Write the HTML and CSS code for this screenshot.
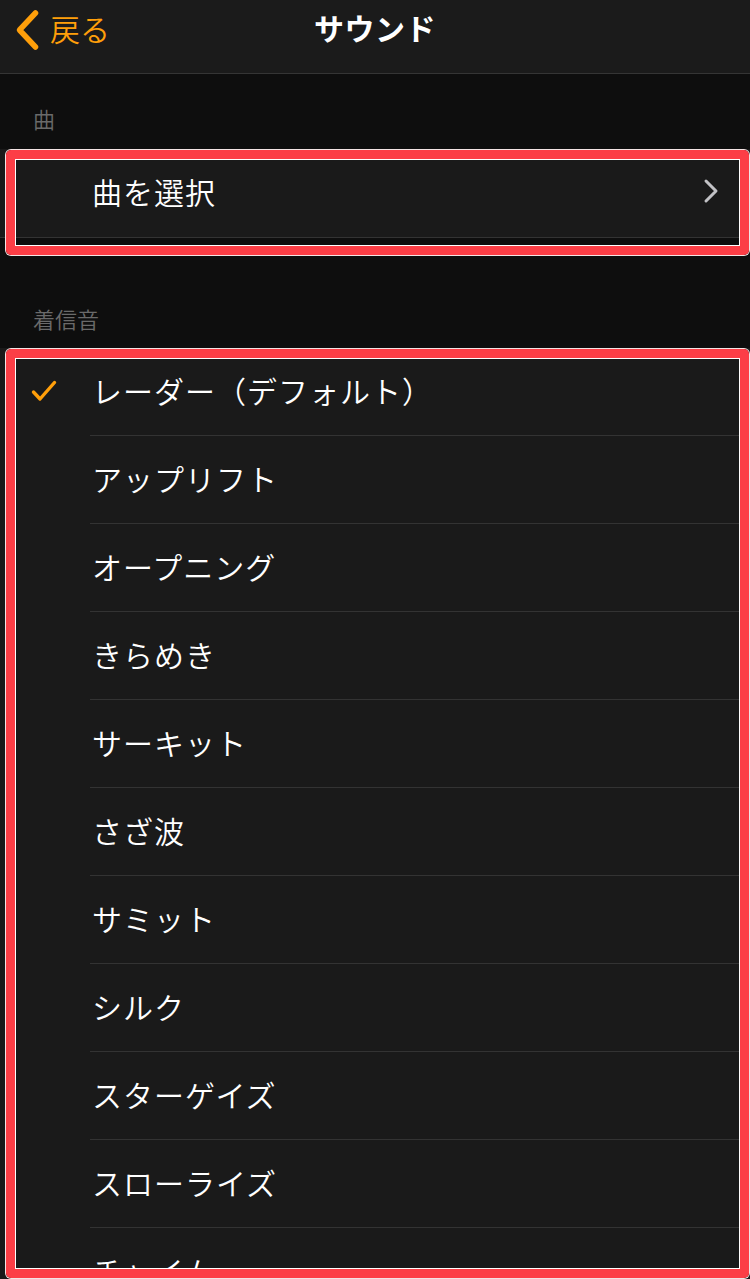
FILE: index.html
```html
<!DOCTYPE html>
<html lang="ja">
<head>
    <meta charset="UTF-8">
    <meta name="viewport" content="width=device-width, initial-scale=1.0">
    <title>サウンド</title>
    <link rel="stylesheet" href="styles.css">
</head>
<body>
    <header class="nav-bar">
        <a class="back-link" href="#">
            <svg class="back-chevron" width="28" height="42" viewBox="0 0 28 42">
                <path d="M22.5 4 L6.5 21 L22.5 38" fill="none" stroke="#ff9f0a" stroke-width="5.5" stroke-linecap="round" stroke-linejoin="round"/>
            </svg>
            <span>戻る</span>
        </a>
        <h1 class="nav-title">サウンド</h1>
        <div></div>
    </header>

    <div class="section-header section-song">曲</div>
    <div class="group group-song">
        <div class="row">
            <div class="mark"></div>
            <div class="label">曲を選択</div>
            <svg class="disclosure" width="16" height="26" viewBox="0 0 16 26">
                <path d="M3 3 L13 13 L3 23" fill="none" stroke="#c2c2c6" stroke-width="3" stroke-linecap="round" stroke-linejoin="round"/>
            </svg>
        </div>
        <div class="highlight highlight-song"></div>
    </div>

    <div class="section-header section-tone">着信音</div>
    <div class="group group-tone">
        <div class="row">
            <div class="mark">
                <svg width="26" height="22" viewBox="0 0 26 22">
                    <path d="M2.5 12 L9 19 L23.5 2.5" fill="none" stroke="#ff9f0a" stroke-width="3.4" stroke-linecap="round" stroke-linejoin="round"/>
                </svg>
            </div>
            <div class="label">レーダー（デフォルト）</div>
        </div>
        <div class="row"><div class="mark"></div><div class="label">アップリフト</div></div>
        <div class="row"><div class="mark"></div><div class="label">オープニング</div></div>
        <div class="row"><div class="mark"></div><div class="label">きらめき</div></div>
        <div class="row"><div class="mark"></div><div class="label">サーキット</div></div>
        <div class="row"><div class="mark"></div><div class="label">さざ波</div></div>
        <div class="row"><div class="mark"></div><div class="label">サミット</div></div>
        <div class="row"><div class="mark"></div><div class="label">シルク</div></div>
        <div class="row"><div class="mark"></div><div class="label">スターゲイズ</div></div>
        <div class="row"><div class="mark"></div><div class="label">スローライズ</div></div>
        <div class="row"><div class="mark"></div><div class="label">チャイム</div></div>
        <div class="row"><div class="mark"></div><div class="label">ビーコン</div></div>
        <div class="highlight highlight-tone"></div>
    </div>
</body>
</html>
```

FILE: styles.css
```css
body {
    margin: 0;
    background-color: #0e0e0e;
    color: #ffffff;
    font-family: "Noto Sans CJK JP", "Noto Sans", sans-serif;
    overflow: hidden;
}

.nav-bar {
    display: grid;
    grid-template-columns: 1fr auto 1fr;
    align-items: center;
    height: 73px;
    background-color: #1b1b1b;
    border-bottom: 1px solid #353535;
}

.back-link {
    display: flex;
    align-items: center;
    gap: 9px;
    padding-left: 13px;
    color: #ff9f0a;
    text-decoration: none;
    font-size: 30px;
    font-weight: 350;
    margin-top: -18px;
}

.back-chevron {
    flex-shrink: 0;
    margin-top: 4px;
}

.nav-title {
    margin: -20px 0 0;
    font-size: 30px;
    font-weight: bold;
    letter-spacing: 0.5px;
}

.section-header {
    padding-left: 33px;
    font-size: 22px;
    font-weight: 350;
    color: #6a6a6a;
    line-height: 30px;
}

.section-song {
    padding-top: 29px;
    height: 46px;
}

.section-tone {
    padding-top: 65px;
    height: 45px;
}

.group {
    position: relative;
    background-color: #1a1a1a;
}

.group-song {
    border-bottom: 1px solid #333333;
}

.row {
    display: flex;
    align-items: stretch;
    height: 88px;
}

.mark {
    width: 90px;
    flex-shrink: 0;
    display: flex;
    align-items: center;
    padding-left: 31px;
    box-sizing: border-box;
    margin-top: -2px;
}

.label {
    flex: 1;
    display: flex;
    align-items: center;
    padding-left: 2px;
    padding-bottom: 4px;
    font-size: 30px;
    font-weight: 350;
    letter-spacing: 1px;
    border-bottom: 1px solid #333333;
}

.group-song .label {
    border-bottom: none;
}

.disclosure {
    align-self: center;
    margin-right: 31px;
    margin-bottom: 4px;
}

/* red annotation frames drawn over the lists */
.highlight {
    position: absolute;
    left: 6px;
    right: 1px;
    top: 1px;
    border: 9px solid #fc3e46;
    border-radius: 5px;
    box-shadow: 0 0 0 1px #f3e4e4, inset 0 0 0 1px #ffffff;
    pointer-events: none;
}

.highlight-song {
    bottom: -18px;
}

.highlight-tone {
    height: 911px;
}
```
